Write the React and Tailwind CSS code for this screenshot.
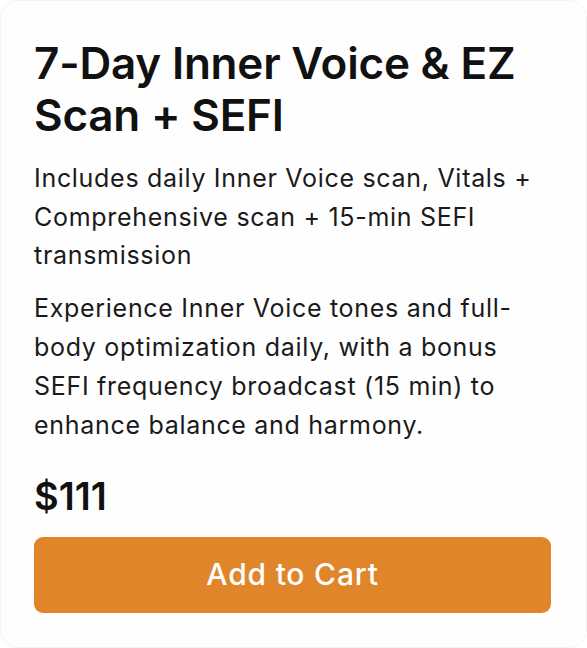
export default function App() {
  return (
    <div className="min-h-screen bg-white" style={{ fontFamily: 'Inter, "Noto Sans", sans-serif' }}>
      <div className="h-[648px] w-[587px] rounded-[18px] border border-gray-100 bg-[#fefefe] pl-[33px] pr-[35px] pt-[36px] text-[#111]">
        <h1 className="text-[44px] font-semibold leading-[52px] tracking-[-0.2px]">
          7-Day Inner Voice &amp; EZ Scan + SEFI
        </h1>
        <p className="mt-[18px] text-[25px] leading-[38.5px] tracking-[0.7px] text-[#1a1a1a]">
          Includes daily Inner Voice scan, Vitals + Comprehensive scan + 15-min SEFI transmission
        </p>
        <p className="mt-[14px] text-[25px] leading-[39px] tracking-[0.7px] text-[#1a1a1a]">
          Experience Inner Voice tones and full-body optimization daily, with a bonus SEFI frequency
          broadcast (15 min) to enhance balance and harmony.
        </p>
        <div className="mt-[29px] text-[38px] font-semibold leading-[44px]">$111</div>
        <button className="mt-[19px] flex h-[76px] w-full items-center justify-center rounded-[9px] bg-[#e1852a] text-[30px] font-medium tracking-[0.8px] text-white">
          Add to Cart
        </button>
      </div>
    </div>
  )
}
